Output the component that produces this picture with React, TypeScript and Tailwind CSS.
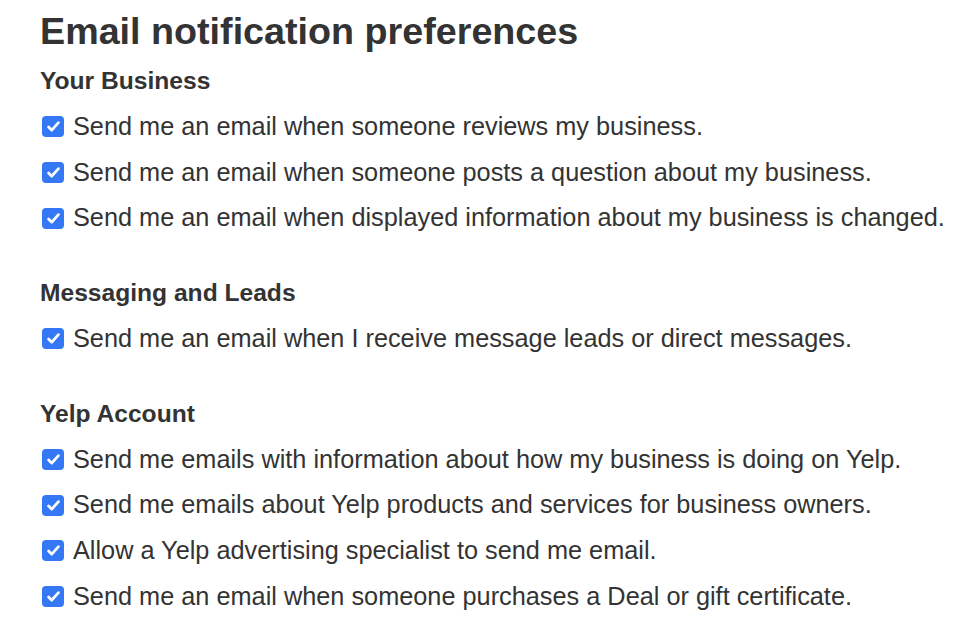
import React from "react";

type Section = { title: string; items: string[] };

const sections: Section[] = [
  {
    title: "Your Business",
    items: [
      "Send me an email when someone reviews my business.",
      "Send me an email when someone posts a question about my business.",
      "Send me an email when displayed information about my business is changed.",
    ],
  },
  {
    title: "Messaging and Leads",
    items: ["Send me an email when I receive message leads or direct messages."],
  },
  {
    title: "Yelp Account",
    items: [
      "Send me emails with information about how my business is doing on Yelp.",
      "Send me emails about Yelp products and services for business owners.",
      "Allow a Yelp advertising specialist to send me email.",
      "Send me an email when someone purchases a Deal or gift certificate.",
    ],
  },
];

function Check() {
  return (
    <span className="flex h-[21px] w-[22px] shrink-0 items-center justify-center rounded-[4px] bg-[#3478f6]">
      <svg width="15" height="15" viewBox="0 0 14 14" fill="none">
        <path d="M2.4 7.4l3 3 6.2-7" stroke="white" strokeWidth="2.6" strokeLinecap="round" strokeLinejoin="round" />
      </svg>
    </span>
  );
}

export default function App() {
  return (
    <div className="min-h-screen bg-white pl-[40px] pt-[6px] text-[#333333]" style={{ fontFamily: '"Liberation Sans", Arial, sans-serif' }}>
      <h1 className="text-[37.7px] font-bold leading-[50px]">Email notification preferences</h1>
      <div className="mt-[2px]">
        {sections.map((s, i) => (
          <div key={s.title} className={i > 0 ? "mt-[29px]" : ""}>
            <h2 className="text-[24.6px] font-bold leading-[46px]">{s.title}</h2>
            {s.items.map((t) => (
              <label key={t} className="flex h-[45.7px] items-center gap-[9px] pl-[2px] text-[25.3px]">
                <Check />
                <span>{t}</span>
              </label>
            ))}
          </div>
        ))}
      </div>
    </div>
  );
}
